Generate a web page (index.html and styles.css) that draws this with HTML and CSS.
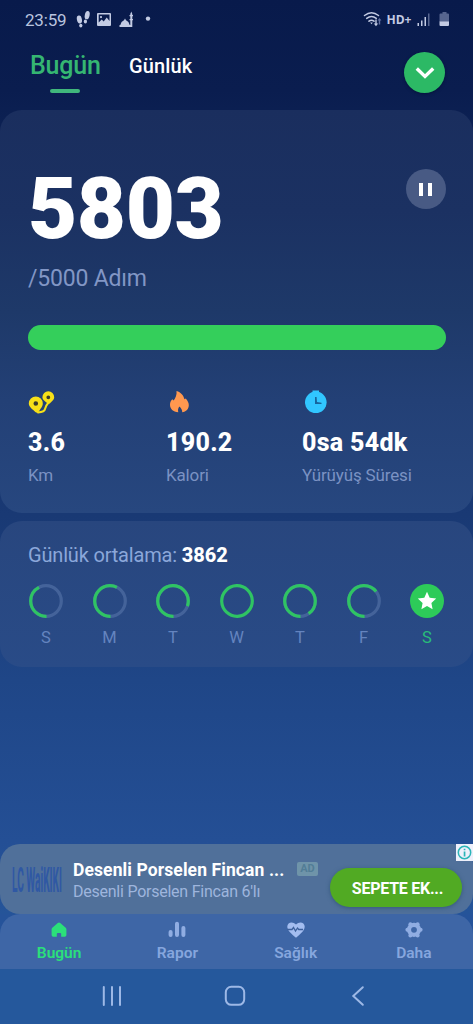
FILE: index.html
```html
<!DOCTYPE html>
<html lang="tr">
<head>
<meta charset="utf-8">
<meta name="viewport" content="width=device-width">
<title>Adım Sayar</title>
<link rel="stylesheet" href="styles.css">
</head>
<body>
<div class="screen">
  <header class="status">
    <span class="clock">23:59</span>
    <svg class="status-left" width="80" height="20" viewBox="0 0 80 20">
      <g fill="#c3cbe3">
        <ellipse cx="3.4" cy="9.5" rx="2.5" ry="4" transform="rotate(-12 3.4 9.5)"/>
        <ellipse cx="4.8" cy="15.6" rx="1.6" ry="1.9"/>
        <ellipse cx="11.2" cy="5.2" rx="2.4" ry="4.2" transform="rotate(12 11.2 5.2)"/>
        <ellipse cx="9.4" cy="11.6" rx="1.6" ry="2"/>
        <path fill-rule="evenodd" d="M22 3h12a1 1 0 0 1 1 1v11a1 1 0 0 1-1 1H22a1 1 0 0 1-1-1V4a1 1 0 0 1 1-1zM22.700 4.600v8l3-3 2 1.800 3-4 2.800 3.600V4.600zM25 6a1 1 0 1 1 0 2.200a1 1 0 0 1 0-2.200z"/>
        <path d="M43.500 17v-2h.8q.7-3.500 3.700-4.800l1-1.700l1 1.700q3 1.300 3.700 4.800h.6V4l1-2.500l1 2.500v13z"/>
        <path d="M53.500 5h3.500v1.200h-3.500zM53.500 9h3.500v1.200h-3.500z"/>
        <circle cx="72" cy="8.600" r="2.200"/>
      </g>
    </svg>
    <svg class="status-right" width="90" height="20" viewBox="0 0 90 20">
      <g fill="none" stroke="#c3cbe3" stroke-width="1.500" stroke-linecap="round">
        <path d="M1.500 5.500q7-5.500 14 0M3.700 8.400q4.800-3.800 9.600 0M6 11.200q2.500-2 5 0"/>
      </g>
      <path fill="#c3cbe3" d="M7.200 12.500h2.600l-1.300 1.800zM12.300 9.500h1.400v4h1.500l-2.200 2.700l-2.200-2.700h1.500z"/>
      <path fill="#6473a3" d="M16.500 8l1.900 2.500h-1.200v4h-1.400v-4h-1.200z"/>
      <text class="hd" x="23.500" y="14" textLength="25" lengthAdjust="spacingAndGlyphs">HD+</text>
      <path fill="#c3cbe3" d="M54.500 13h1.500v3h-1.500zM58 10.500h1.500V16H58zM61.500 7H63v9h-1.500z"/>
      <path fill="#56658f" d="M65 3.500h1.500V16H65zM77.500 3.500h2V2h4v1.500h1.500q1 0 1 1V12H76.500V4.500q0-1 1-1z"/>
      <path fill="#c3cbe3" d="M76.500 11.500H86V15q0 1-1 1h-7.500q-1 0-1-1z"/>
    </svg>
  </header>

  <nav class="tabs">
    <span class="tab tab-active">Bugün</span>
    <span class="tab tab-daily">Günlük</span>
    <button class="round expand" aria-label="Genişlet">
      <svg width="20" height="14" viewBox="0 0 20 14"><path d="M1.800 2.500L10 10.400L18.200 2.500" fill="none" stroke="#fff" stroke-width="3.400"/></svg>
    </button>
  </nav>

  <main>
    <section class="card today">
      <div class="steps-row">
        <span class="steps">5803</span>
        <button class="round pause" aria-label="Duraklat"><i></i><i></i></button>
      </div>
      <div class="goal">/5000 Adım</div>
      <div class="bar"></div>
      <div class="stats">
        <div class="stat">
          <svg width="28" height="26" viewBox="0 0 28 26">
            <path fill="none" stroke="#f7e018" stroke-width="2" stroke-linecap="round" d="M10 22.500q6.500-.5 7-3.500t3.500-6.500"/>
            <circle cx="7.800" cy="13.500" r="3" fill="#3a3c2b"/><circle cx="20.300" cy="7.300" r="2.500" fill="#3a3c2b"/>
            <path fill="#f7e018" fill-rule="evenodd" d="M7.800 6.500a7 7 0 0 1 7 7c0 3.500-2.500 5-3.800 8q-1.600 2-3.700.5C5 19.500.8 17 .8 13.500a7 7 0 0 1 7-7zm0 4.700a2.300 2.300 0 1 0 0 4.600a2.300 2.300 0 0 0 0-4.600z"/>
            <path fill="#f7e018" fill-rule="evenodd" d="M20.300 1.300a5.900 5.900 0 0 1 5.900 5.900c0 3-3 4.500-4.500 6.300q-1.200.8-2.200 0C18 11.500 14.400 10.200 14.400 7.200a5.900 5.900 0 0 1 5.900-5.900zm0 4.100a1.900 1.900 0 1 0 0 3.800a1.900 1.900 0 0 0 0-3.800z"/>
          </svg>
          <b>3.6</b><span>Km</span>
        </div>
        <div class="stat">
          <svg width="28" height="26" viewBox="0 0 28 26"><path fill="#ff984f" d="M10.500 1c4.500 1.300 7 4.500 8 8.300l1.300-.8c2 2.500 3 4.500 3 6.700c0 3.700-2.600 6.500-6.600 7c.2-2-.7-3.300-2.700-5.700c-1.600 1.800-1.700 3.500-1.200 5.700C7 22 4 18.700 4 14.700c0-2.200.7-4 2.300-5.500l1.400 1.300C9.500 8 11 5 10.500 1z"/></svg>
          <b>190.2</b><span>Kalori</span>
        </div>
        <div class="stat">
          <svg width="28" height="26" viewBox="0 0 28 26"><path fill="#31c6ff" d="M10.500.5h6.500v3h-6.500z"/><circle cx="13.800" cy="12.300" r="10.800" fill="#31c6ff"/><path fill="#17659c" d="M13 7l1.600 0L15 12l4.500.7v1.200H13z"/></svg>
          <b>0sa 54dk</b><span>Yürüyüş Süresi</span>
        </div>
      </div>
    </section>

    <section class="card week">
      <div class="average"><span>Günlük ortalama:</span> <b>3862</b></div>
      <div class="days">
        <div class="day"><svg width="34" height="34" viewBox="0 0 34 34"><circle class="track" cx="17" cy="17" r="15.300"/><circle class="arc" pathLength="100" stroke-dasharray="43 100" cx="17" cy="17" r="15.300"/></svg><span>S</span></div>
        <div class="day"><svg width="34" height="34" viewBox="0 0 34 34"><circle class="track" cx="17" cy="17" r="15.300"/><circle class="arc" pathLength="100" stroke-dasharray="58 100" cx="17" cy="17" r="15.300"/></svg><span>M</span></div>
        <div class="day"><svg width="34" height="34" viewBox="0 0 34 34"><circle class="track" cx="17" cy="17" r="15.300"/><circle class="arc" pathLength="100" stroke-dasharray="81 100" cx="17" cy="17" r="15.300"/></svg><span>T</span></div>
        <div class="day"><svg width="34" height="34" viewBox="0 0 34 34"><circle class="arc" cx="17" cy="17" r="15.300"/></svg><span>W</span></div>
        <div class="day"><svg width="34" height="34" viewBox="0 0 34 34"><circle class="track" cx="17" cy="17" r="15.300"/><circle class="arc" pathLength="100" stroke-dasharray="91 100" cx="17" cy="17" r="15.300"/></svg><span>T</span></div>
        <div class="day"><svg width="34" height="34" viewBox="0 0 34 34"><circle class="track" cx="17" cy="17" r="15.300"/><circle class="arc" pathLength="100" stroke-dasharray="65 100" cx="17" cy="17" r="15.300"/></svg><span>F</span></div>
        <div class="day day-now"><svg width="34" height="34" viewBox="0 0 34 34"><circle cx="17" cy="17" r="17" fill="#2dcb59"/><path fill="#fff" d="M17 7.800l2.700 5.900 6.500.8-4.800 4.400 1.200 6.300-5.600-3.100-5.600 3.100 1.200-6.300-4.800-4.400 6.500-.8z"/></svg><span>S</span></div>
      </div>
    </section>
  </main>

  <aside class="ad">
    <svg class="brand" width="52" height="50" viewBox="0 0 52 50"><text transform="translate(1 38) scale(1 2.500)" textLength="50" lengthAdjust="spacingAndGlyphs">LC WaiKIKI</text></svg>
    <div class="ad-copy">
      <div class="ad-head"><b>Desenli Porselen Fincan ...</b><span class="tag">AD</span></div>
      <div class="ad-sub">Desenli Porselen Fincan 6'lı</div>
    </div>
    <button class="cta">SEPETE EK...</button>
    <svg class="info" width="17" height="17" viewBox="0 0 17 17"><path fill="#eef0fb" d="M0 0h17v17H0z"/><circle cx="8.500" cy="8.500" r="6.200" fill="none" stroke="#2bb5b8" stroke-width="1.500"/><path fill="#2bb5b8" d="M7.700 4.700h1.700v1.600H7.700zM7.700 7.400h1.700v5H7.700z"/></svg>
  </aside>

  <div class="nav-back">
  <nav class="bottom">
    <div class="item item-active"><svg width="22" height="18" viewBox="0 0 22 18"><path fill="#2be07a" d="M11 1.500q.6 0 1.200.5l5.500 4.700q.7.600.7 1.400V14q0 1.700-1.700 1.700h-3.500v-2.700q0-1-1-1h-2.400q-1 0-1 1v2.700H5.300Q3.600 15.700 3.600 14V8.100q0-.8.7-1.400L9.800 2Q10.400 1.500 11 1.500z"/></svg><span>Bugün</span></div>
    <div class="item"><svg width="22" height="18" viewBox="0 0 22 18"><path fill="none" stroke="#90ade2" stroke-width="4" stroke-linecap="round" d="M4.600 11v2.900M11 2.800v11.100M17.400 7v6.900"/></svg><span>Rapor</span></div>
    <div class="item"><svg width="22" height="18" viewBox="0 0 22 18"><path fill="#a3bdf0" d="M11 16.800C6 12.500 2.300 9.500 2.300 5.600C2.300 1 8 0 11 3.500C14 0 19.700 1 19.700 5.600c0 3.900-3.700 6.900-8.700 11.200z"/><path fill="none" stroke="#3d619c" stroke-width="1.300" d="M2 8.500h5l1.500-2 2 3.500 2-3 1.200 1.500H18"/></svg><span>Sağlık</span></div>
    <div class="item"><svg width="22" height="18" viewBox="0 0 22 18"><circle cx="11" cy="8.800" r="5" fill="none" stroke="#90ade2" stroke-width="4.200"/><g fill="#90ade2"><circle cx="4.400" cy="8.800" r="2"/><circle cx="17.600" cy="8.800" r="2"/><circle cx="7.400" cy="3.200" r="2"/><circle cx="14.600" cy="3.200" r="2"/><circle cx="7.400" cy="14.400" r="2"/><circle cx="14.600" cy="14.400" r="2"/></g></svg><span>Daha</span></div>
  </nav>
  </div>

  <footer class="system">
    <svg width="20" height="22" viewBox="0 0 20 22"><path d="M1.800 2v18M10 2v18M18 2v18"/></svg>
    <svg width="22" height="22" viewBox="0 0 22 22"><rect x="1.800" y="1.800" width="18.400" height="18" rx="5.500"/></svg>
    <svg width="22" height="22" viewBox="0 0 22 22"><path d="M15.800 2.200L6.300 11l9.500 8.800"/></svg>
  </footer>
</div>
</body>
</html>
```

FILE: styles.css
```css
* { box-sizing: border-box; }
body { margin: 0; font-family: Roboto, "Noto Sans", sans-serif; }
button { border: 0; padding: 0; font-family: inherit; }
svg { display: block; flex: none; }
.screen {
  width: 473px;
  height: 1024px;
  display: flex;
  flex-direction: column;
  overflow: hidden;
  background: linear-gradient(#081a4b 0, #0a1d4f 90px, #0f2659 180px, #193974 515px, #1f4687 680px, #244f95 840px, #25589c 970px);
}

.status { height: 39px; padding: 0 20px 0 25px; display: flex; align-items: center; }
.clock { font-size: 17px; color: #b9c4df; width: 51px; letter-spacing: -0.2px; }
.status-right { margin-left: auto; }
.hd { font: 700 12.500px "Open Sans", sans-serif; fill: #c3cbe3; }

.tabs { height: 71px; padding: 0 28px 0 30px; display: flex; align-items: flex-start; }
.tab { line-height: 54px; font-weight: 500; white-space: nowrap; }
.tab-active { width: 99px; color: #35b672; font-size: 25px; letter-spacing: -0.200px; height: 54px; }
.tab-active::after { content: ""; display: block; width: 30px; height: 4px; margin: -4px 0 0 20px; border-radius: 2px; background: #40b77c; }
.tab-daily { color: #fff; font-size: 20px; letter-spacing: 0.150px; }
.round { width: 40px; height: 40px; border-radius: 50%; display: flex; align-items: center; justify-content: center; flex: none; }
.expand { width: 41px; height: 41px; margin: 13px 0 0 auto; background: #2cb965; box-shadow: 0 1px 3px #06143c; }

.card { border-radius: 22px; }
.today { height: 403px; padding: 53px 27px 0 28px; background: linear-gradient(#1a2e5e, #1b3162 25%, #1e3969 50%, #234076 72%, #27477f); }
.steps-row { height: 90px; display: flex; justify-content: space-between; }
.steps { font-size: 85px; font-weight: 900; line-height: 93px; color: #fff; letter-spacing: -0.400px; }
.pause { margin: 6px 0.500px 0 0; background: #485a84; gap: 5px; }
.pause i { width: 4px; height: 13px; background: #fff; }
.goal { height: 50px; line-height: 52px; font-size: 23px; letter-spacing: -0.200px; color: #8296c5; white-space: nowrap; }
.bar { height: 25px; margin-top: 22px; border-radius: 13px; background: #34cf5b; }
.stats { display: flex; margin-top: 40px; }
.stat { display: flex; flex-direction: column; width: 138px; white-space: nowrap; }
.stat:nth-child(2) { width: 136px; }
.stat b { line-height: 30px; margin-top: 12px; font-size: 25px; font-weight: 800; letter-spacing: 0.300px; color: #fff; }
.stat span { line-height: 24px; margin-top: 5px; font-size: 17px; letter-spacing: -0.150px; color: #7b92c3; }

.week { height: 146px; margin-top: 8px; padding: 19px 28px 0 28px; background: linear-gradient(#28467e, #294b87); }
.average { line-height: 30px; font-size: 20px; letter-spacing: -0.180px; color: #8ba7da; white-space: nowrap; }
.average b { color: #fff; font-weight: 800; letter-spacing: 0; }
.days { display: flex; justify-content: space-between; margin-top: 14px; }
.day { width: 36px; display: flex; flex-direction: column; align-items: center; color: #6484bf; font-size: 16.500px; }
.day span { line-height: 24px; margin-top: 8px; }
.day-now { color: #28bc79; }
.track, .arc { fill: none; stroke-width: 3.200; }
.track { stroke: #44639a; }
.arc { stroke: #2fc463; transform: rotate(88deg); transform-origin: 17px 17px; }

.ad { position: relative; z-index: 1; height: 70px; margin-top: auto; padding-left: 11px; border-radius: 20px; display: flex; background: #50709a; }
.brand { margin-top: 10px; }
.brand text { font: 700 14px Roboto, sans-serif; fill: #2f58a4; }
.ad-copy { width: 256px; padding: 15px 0 0 10px; white-space: nowrap; }
.ad-head { display: flex; height: 22px; line-height: 22px; }
.ad-head b { font-size: 17.500px; letter-spacing: 0.100px; color: #fff; width: 224px; }
.tag { width: 21px; height: 14px; margin-top: 3px; border-radius: 2px; background: #6f94a9; color: #527d96; font-size: 11px; font-weight: 700; line-height: 14px; text-align: center; }
.ad-sub { line-height: 21px; font-size: 16px; letter-spacing: -0.240px; color: #9eb5dd; }
.cta { width: 132px; height: 39px; margin: 24px 0 0 11px; padding: 1px 0 0 3px; border-radius: 20px; background: #51aa23; color: #fff; font-size: 16px; font-weight: 700; letter-spacing: -0.250px; box-shadow: 0 1px 4px #35597d; }
.info { position: absolute; right: 0; top: 0; }

.nav-back { background: #25539a; }
.bottom { height: 55px; border-radius: 20px 20px 0 0; display: flex; background: #3e66a6; }
.item { width: 118.250px; padding-top: 7px; display: flex; flex-direction: column; align-items: center; color: #86a6de; font-size: 15.500px; font-weight: 600; }
.item span { line-height: 24px; margin-top: 2px; }
.item-active { color: #2be07a; }

.system { height: 55px; padding: 0 104px 2px 102px; display: flex; align-items: center; justify-content: space-between; background: #25589c; }
.system path, .system rect { fill: none; stroke: #9db8e6; stroke-width: 2; stroke-linecap: round; }
```
